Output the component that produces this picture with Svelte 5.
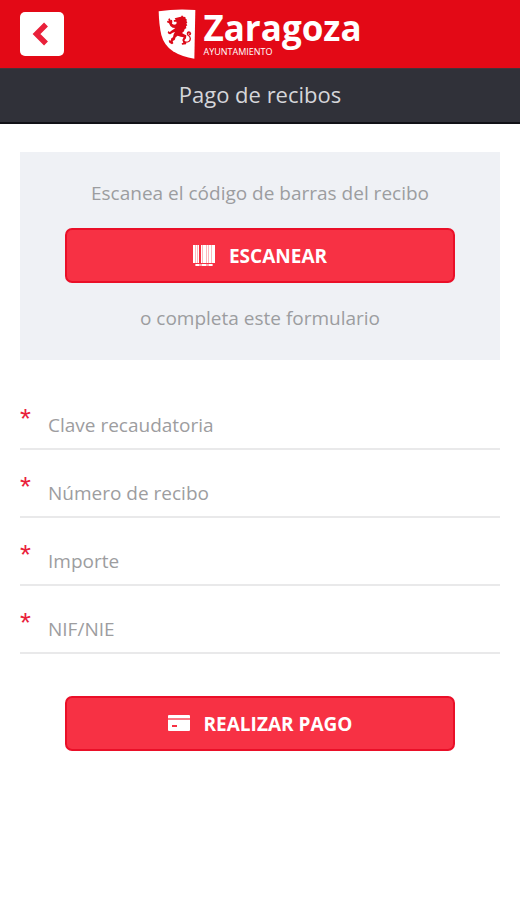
<script>
  const fields = [
    { id: 'clave', label: 'Clave recaudatoria', mode: 'text' },
    { id: 'numero', label: 'Número de recibo', mode: 'numeric' },
    { id: 'importe', label: 'Importe', mode: 'decimal' },
    { id: 'nif', label: 'NIF/NIE', mode: 'text' }
  ];
</script>

<div class="page">
  <header>
    <button class="back" type="button" aria-label="Volver">
      <svg width="16" height="24" viewBox="0 0 16 24" aria-hidden="true">
        <path d="M14 2.500 4.500 12l9.500 9.500" fill="none" stroke="#e9203a" stroke-width="5.500" />
      </svg>
    </button>
    <div class="brand">
      <svg class="shield" width="38" height="50" viewBox="10 10 114 150" aria-hidden="true">
        <path d="M12 17Q66 8 122 13L119 159Q82 154 55 137Q28 119 20 88Q13 58 12 17Z" fill="#fff" />
        <g fill="#dc0917">
          <path d="M72 35l7-2 3-4 4 4 6 1 1 5 4 3-2 4 3 4-3 4 3 5-4 3 1 6-5 2-2 7-6 5 6 4 7 3-1 9-5 6 6 7-1 5-12 1-1-4 5-2-3-8 4-8-9-2-9-3-6 5-3 8-6 3 2 7-4 3-8-5-2-6 4-2 2 3 2-8 5-3 2-9 4-7-7 2-7 5-5-1-3-5 3-4 3 4 5-5 7-4 5-4-8-1-7-5-4-8-6-3 1-5 4 2-1-7 4-2 3 6 4-2 1 6-1 6 6 3 6-1 2-4-1-4-7 0-1-4 6-2-3-4z" />
          <path d="M88 107q16 3 17-8 0-7-6-9-5-4-2-10 4-6 10-2 5 5 1 10-3 2-6-1 3-1 2-4-4-1-3 4 8 4 8 12-1 14-21 12z" />
        </g>
      </svg>
      <div class="words">
        <span class="city">Zaragoza</span>
        <span class="council">AYUNTAMIENTO</span>
      </div>
    </div>
  </header>

  <h1>Pago de recibos</h1>

  <main>
    <section class="scan">
      <p>Escanea el código de barras del recibo</p>
      <button class="action" type="button">
        <svg width="22" height="22" viewBox="0 0 22 22" fill="#fff" aria-hidden="true">
          <path d="M0 0h2v18H0zM3 0h1v18H3zM5 0h1v18H5zM8 0h1v18H8zM10 0h3v18h-3zM14 0h1v18h-1zM16 0h2v18h-2zM19 0h3v18h-3z" />
          <path d="M0 0h6v18H0zM8 0h14v18H8z" opacity=".65" />
          <path d="M2 19h18v2H2z" opacity=".6" />
          <path d="M3 19h3v2H3zM9 19h4v2H9zM16 19h3v2h-3z" />
        </svg>
        <span>ESCANEAR</span>
      </button>
      <p>o completa este formulario</p>
    </section>

    <form onsubmit={(e) => e.preventDefault()}>
      {#each fields as field}
        <div class="field">
          <label for={field.id} aria-label={field.label}>*</label>
          <input id={field.id} type="text" inputmode={field.mode} placeholder={field.label} required />
        </div>
      {/each}
      <button class="action" type="submit">
        <svg width="22" height="22" viewBox="0 0 22 22" aria-hidden="true">
          <path d="M1 2h20q1 0 1 1v2H0V3q0-1 1-1zM0 7h22v10q0 1-1 1H1q-1 0-1-1z" fill="#fff" />
          <path d="M0 5h22v2H0z" fill="#fff" opacity=".35" />
          <path d="M4 12h5v2H4z" fill="#f73144" />
        </svg>
        <span>REALIZAR PAGO</span>
      </button>
    </form>
  </main>
</div>

<style>
  :global(body) {
    margin: 0;
    background: #fff;
  }

  .page,
  button,
  input {
    font-family: 'Open Sans', 'Noto Sans', sans-serif;
  }

  header {
    display: grid;
    grid-template-columns: 44px 1fr 44px;
    align-items: center;
    box-sizing: border-box;
    height: 68px;
    padding: 0 20px;
    background: #e30916;
  }

  .back {
    display: flex;
    align-items: center;
    justify-content: center;
    width: 44px;
    height: 44px;
    padding: 0 4px 0 0;
    border: 0;
    border-radius: 5px;
    background: #fff;
  }

  .brand {
    display: flex;
    justify-content: center;
    gap: 7px;
    color: #fff;
  }

  .shield {
    flex: none;
  }

  .words {
    display: flex;
    flex-direction: column;
  }

  .city {
    font-size: 35px;
    font-weight: 700;
    line-height: 38px;
  }

  .council {
    font-size: 9px;
    line-height: 10px;
  }

  h1 {
    box-sizing: border-box;
    margin: 0;
    padding: 10px 20px 12px;
    border-top: 1px solid #44333a;
    border-bottom: 2px solid #111116;
    background: #303139;
    color: #d5d6da;
    font-size: 22px;
    font-weight: 400;
    line-height: 31px;
    text-align: center;
  }

  main {
    padding: 28px 20px;
  }

  .scan {
    padding: 27px 45px 28px;
    background: #eff1f5;
  }

  p {
    margin: 0;
    color: #9c9da0;
    font-size: 19px;
    line-height: 28px;
    text-align: center;
  }

  .action {
    display: flex;
    align-items: center;
    justify-content: center;
    gap: 14px;
    box-sizing: border-box;
    width: 100%;
    height: 55px;
    border: 2px solid #ea0f28;
    border-radius: 7px;
    background: #f73144;
    color: #fff;
    font-size: 19px;
    font-weight: 700;
  }

  .scan .action {
    margin: 21px 0;
  }

  form {
    padding-top: 22px;
  }

  .field {
    display: flex;
    box-sizing: border-box;
    height: 68px;
    border-bottom: 2px solid #e9e9ea;
  }

  label {
    width: 28px;
    padding-top: 21px;
    color: #e9203a;
    font-family: 'Liberation Sans', Arial, sans-serif;
    font-size: 28px;
    line-height: 32px;
  }

  input {
    flex: 1;
    min-width: 0;
    padding: 20px 0 0;
    border: 0;
    outline: 0;
    background: transparent;
    color: #55565a;
    font-size: 19px;
  }

  input::placeholder {
    color: #9d9d9f;
    opacity: 1;
  }

  form .action {
    width: auto;
    min-width: calc(100% - 90px);
    margin: 42px 45px 0;
  }
</style>
